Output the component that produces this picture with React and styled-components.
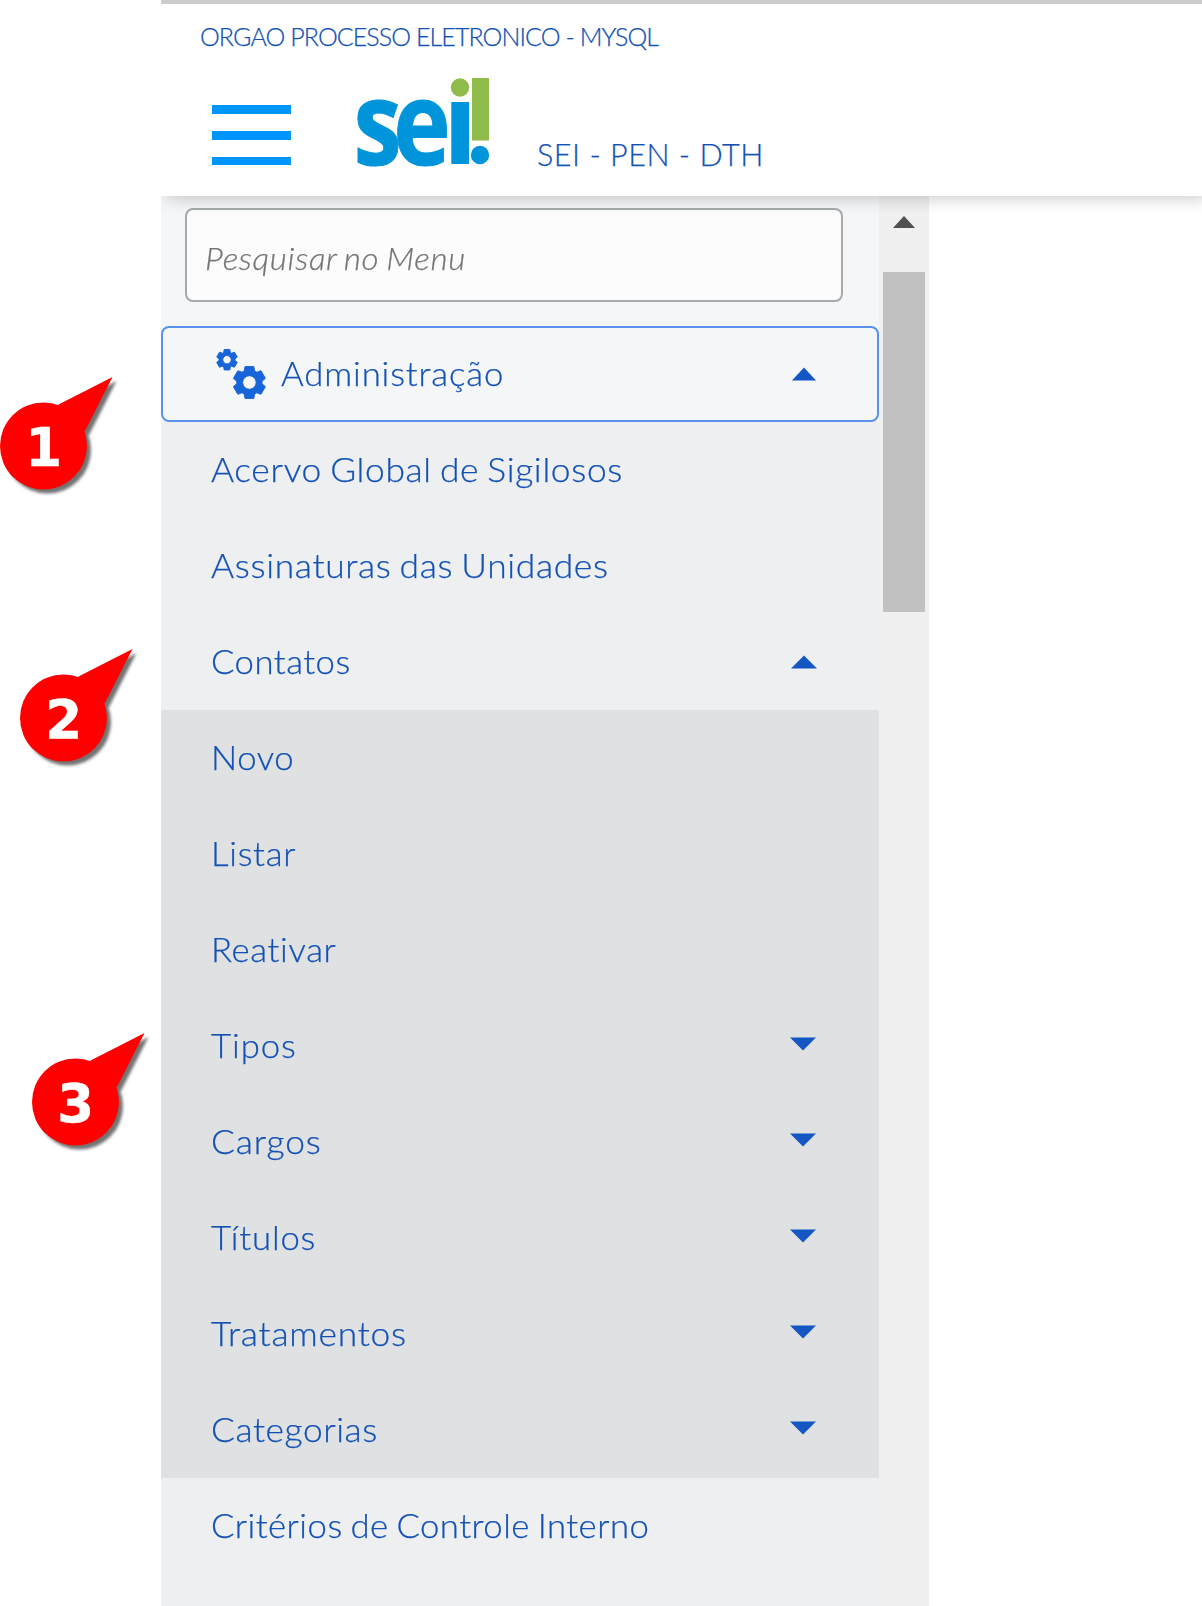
import React from "react";
import styled, { createGlobalStyle } from "styled-components";

const GlobalStyle = createGlobalStyle`
  * { box-sizing: border-box; }
  body {
    margin: 0;
    background: #fff;
    font-family: Lato, "Open Sans", sans-serif;
    font-weight: 300;
    color: #1351b4;
  }
`;

const Page = styled.div`
  position: relative;
  width: 1202px;
  height: 1606px;
  padding-left: 161px;
  overflow: hidden;
  background: #fff;
`;

const Window = styled.div`
  height: 100%;
  display: flex;
  flex-direction: column;
  overflow: hidden;
`;

const Header = styled.header`
  flex: none;
  position: relative;
  z-index: 1;
  height: 196px;
  border-top: 4px solid #cccecd;
  padding: 16px 0 0 39px;
  background: #fff;
  box-shadow: 6px 2px 16px rgba(0, 0, 0, 0.22);
`;

const Label = styled.span`
  display: block;
  white-space: nowrap;
  line-height: 32px;
  font-size: ${(p) => p.$size || 33.4}px;
  letter-spacing: ${(p) => p.$track || 0}px;
  word-spacing: ${(p) => p.$words || 0}px;
  transform: scaleX(${(p) => p.$stretch || 1.04});
  transform-origin: left;
  -webkit-text-stroke: 0.25px currentColor;
`;

const Brand = styled.div`
  display: flex;
  align-items: flex-start;
  height: 112px;
  padding-left: 11.5px;
`;

const MenuToggle = styled.div`
  display: flex;
  flex-direction: column;
  gap: 17px;
  width: 79px;
  padding-top: 53.3px;
`;

const Bar = styled.span`
  height: 8.7px;
  background: #0095fa;
`;

const Logo = styled.svg`
  display: block;
  width: 140px;
  height: 100px;
  margin: 18px 0 0 60.5px;
  overflow: visible;
`;

const SystemName = styled.div`
  padding: 87px 0 0 46px;
`;

const Body = styled.div`
  flex: 1;
  min-height: 0;
  display: flex;
`;

const Menu = styled.nav`
  width: 718px;
  display: flex;
  flex-direction: column;
  background: #f4f6f8;
`;

const Search = styled.div`
  flex: none;
  display: flex;
  align-items: center;
  width: 658px;
  height: 94px;
  margin: 12px 0 24px 24px;
  padding: 8px 0 0 18px;
  border: 2px solid #a5abad;
  border-radius: 8px;
  background: #fcfcfc;
  color: #757575;
  font-style: italic;
`;

const Row = styled.div`
  flex: none;
  display: flex;
  align-items: center;
  justify-content: space-between;
  height: 96px;
  padding: 0 62px 2px 50px;
`;

const ActiveRow = styled(Row)`
  padding: 0 61px 2px 48px;
  border: 2px solid #5992ed;
  border-radius: 8px;
  background: #f4f6f8;
`;

const ActiveTitle = styled.div`
  display: flex;
  align-items: center;
  gap: 12.2px;
`;

const GearBox = styled.svg`
  display: block;
  width: 54px;
  height: 56px;
  margin: 2px 0 0 3.8px;
`;

const Submenu = styled.div`
  flex: 1;
  background: #edeff1;
`;

const NestedMenu = styled.div`
  background: #dfe1e2;
`;

const Caret = styled.svg`
  display: block;
  width: ${(p) => p.$width}px;
  height: 14px;
  margin-top: ${(p) => (p.$up ? 1 : -2)}px;
  margin-right: ${(p) => (p.$up ? 0 : 1)}px;
  fill: #1456c3;
`;

const Scrollbar = styled.div`
  width: 50px;
  display: flex;
  flex-direction: column;
  align-items: center;
  padding-top: 20px;
  background: #f0f0f0;
`;

const ScrollArrow = styled.svg`
  display: block;
  width: 22px;
  height: 12px;
  fill: #505050;
`;

const Thumb = styled.div`
  width: 42px;
  height: 340px;
  margin-top: 44px;
  background: #c1c1c1;
`;

const Marker = styled.svg`
  position: absolute;
  left: ${(p) => p.$x}px;
  top: ${(p) => p.$y}px;
  width: 126px;
  height: 124px;
  overflow: visible;
  filter: drop-shadow(4.5px 4.5px 1.6px rgba(0, 0, 0, 0.55));
`;

const Digit = styled.text`
  font: bold 53px "DejaVu Sans", sans-serif;
  fill: #fff;
  stroke: #fff;
  stroke-width: 0.5px;
  text-anchor: middle;
`;

const LogoText = styled.text`
  font: bold 117px "Open Sans", sans-serif;
  letter-spacing: -10.2px;
  fill: #0095db;
  stroke: #0095db;
  stroke-width: 1px;
`;

function gearPath(cx, cy, outer, body, hole) {
  const pts = [];
  for (let i = 0; i < 6; i++) {
    const a = (i * 60 - 90) * (Math.PI / 180);
    [[-0.42, body], [-0.27, outer], [0.27, outer], [0.42, body]].forEach(([d, r]) => {
      pts.push(`${(cx + r * Math.cos(a + d)).toFixed(2)} ${(cy + r * Math.sin(a + d)).toFixed(2)}`);
    });
  }
  return `M${pts.join("L")}Z M${cx - hole} ${cy}a${hole} ${hole} 0 1 0 ${hole * 2} 0a${hole} ${hole} 0 1 0 ${-hole * 2} 0Z`;
}

function Gears() {
  return (
    <GearBox viewBox="2 0 54 56" fill="#1864d9" fillRule="evenodd" stroke="#1864d9" strokeWidth="1" strokeLinejoin="round">
      <path d={gearPath(14, 13.7, 10.6, 8, 4.2)} />
      <path d={gearPath(36.4, 36.5, 16.5, 12.7, 6.8)} />
    </GearBox>
  );
}

function Chevron({ up, width = 26 }) {
  return (
    <Caret $up={up} $width={width} viewBox="0 0 26 14" preserveAspectRatio="none">
      <path d={up ? "M0 13.5L13 0.5L26 13.5Z" : "M0 0.5L13 13.5L26 0.5Z"} />
    </Caret>
  );
}

function Item({ text, track, words, stretch, caret }) {
  return (
    <Row>
      <Label $track={track} $words={words} $stretch={stretch}>{text}</Label>
      {caret && <Chevron up={caret === "up"} />}
    </Row>
  );
}

const nested = [
  { text: "Novo", track: 0.5 },
  { text: "Listar", track: 0.65 },
  { text: "Reativar", track: 0.6 },
  { text: "Tipos", track: 0.9, caret: "down" },
  { text: "Cargos", track: 0.8, stretch: 1.06, caret: "down" },
  { text: "Títulos", track: 0.8, caret: "down" },
  { text: "Tratamentos", track: 0.7, stretch: 1.06, caret: "down" },
  { text: "Categorias", track: 0.5, stretch: 1.06, caret: "down" },
];

const markers = [
  { n: 1, x: 0, y: 377 },
  { n: 2, x: 20, y: 649 },
  { n: 3, x: 32, y: 1033 },
];

export default function App() {
  return (
    <Page>
      <GlobalStyle />
      <Window>
        <Header>
          <Label $size={25} $track={-0.92} $stretch={1}>ORGAO PROCESSO ELETRONICO - MYSQL</Label>
          <Brand>
            <MenuToggle>
              <Bar />
              <Bar />
              <Bar />
            </MenuToggle>
            <Logo viewBox="351 70 140 100">
              <LogoText transform="translate(353.5 165) scale(0.83 1)">se</LogoText>
              <rect x="451.3" y="102" width="17.7" height="62" fill="#0095db" />
              <circle cx="460" cy="87.5" r="9.2" fill="#8fbc4b" />
              <rect x="472" y="78" width="17" height="62.5" fill="#8fbc4b" />
              <circle cx="480" cy="155" r="9.2" fill="#0095db" />
            </Logo>
            <SystemName>
              <Label $size={30.6} $track={0.5} $stretch={1}>SEI - PEN - DTH</Label>
            </SystemName>
          </Brand>
        </Header>
        <Body>
          <Menu>
            <Search>
              <Label $size={30.6} $track={0.6} $words={-2} $stretch={1.085}>Pesquisar no Menu</Label>
            </Search>
            <ActiveRow>
              <ActiveTitle>
                <Gears />
                <Label $track={0.83}>Administração</Label>
              </ActiveTitle>
              <Chevron up width={24} />
            </ActiveRow>
            <Submenu>
              <Item text="Acervo Global de Sigilosos" track={0.61} words={-2} stretch={1.06} />
              <Item text="Assinaturas das Unidades" track={0.6} words={-2} stretch={1.06} />
              <Item text="Contatos" track={0.45} caret="up" />
              <NestedMenu>
                {nested.map((item) => (
                  <Item key={item.text} {...item} />
                ))}
              </NestedMenu>
              <Item text="Critérios de Controle Interno" track={0.45} words={-2} />
            </Submenu>
          </Menu>
          <Scrollbar>
            <ScrollArrow viewBox="0 0 22 12">
              <path d="M0 12L11 0L22 12Z" />
            </ScrollArrow>
            <Thumb />
          </Scrollbar>
        </Body>
      </Window>
      {markers.map((m) => (
        <Marker key={m.n} $x={m.x} $y={m.y} viewBox="0 0 126 124">
          <circle cx="43.5" cy="69" r="43.5" fill="#fe0000" />
          <path d="M58.5 27.5L112.5 0L85 54L60 60Z" fill="#fe0000" />
          <Digit x="43.8" y="89">{m.n}</Digit>
        </Marker>
      ))}
    </Page>
  );
}
